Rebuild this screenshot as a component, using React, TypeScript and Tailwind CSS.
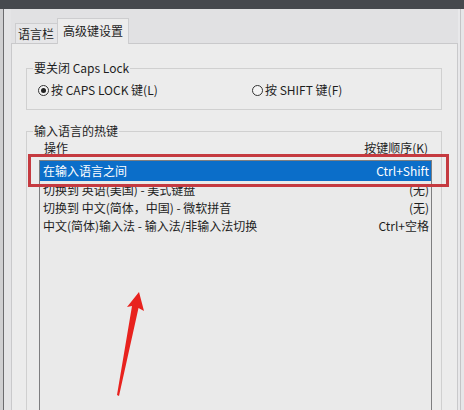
export default function App() {
  return (
    <div className="relative w-[464px] h-[410px] overflow-hidden flex flex-col bg-[#e1e1e3] text-[12px] leading-[16px] text-[#1e1e1e] font-['Noto_Sans_CJK_SC',sans-serif]">
      <div className="h-[9px] bg-[#46494e] shrink-0" />
      <div className="flex flex-1 min-h-0">
        <div className="w-[11px] shrink-0 flex">
          <div className="w-[3px] bg-[#cfcfd1]" />
          <div className="w-px bg-[#6b6b6e]" />
          <div className="flex-1 bg-[#e4e4e6]" />
        </div>
        <div className="w-[447px] shrink-0 flex flex-col">
          <div className="h-[34px] shrink-0 flex items-end pl-[4px]">
            <div className="w-[42px] h-[20px] border border-b-0 border-r-0 border-[#cdcdcf] bg-[#e6e6e8] flex items-center pl-[2px] whitespace-nowrap">
              语言栏
            </div>
            <div className="relative z-10 -mb-px w-[72px] h-[26px] border border-b-0 border-[#cdcdcf] bg-[#ececec] flex items-start justify-center pt-[4px] whitespace-nowrap">
              高级键设置
            </div>
          </div>
          <div className="flex-1 border border-b-0 border-[#c9c9cb] bg-[#ececec] pl-[14px] pt-[16px]">
            <fieldset className="w-[416px] border border-[#d0d0d0] pl-[6px] pb-[10px]">
              <legend className="px-[1px] leading-[16px]">要关闭 Caps Lock</legend>
              <div className="flex items-center h-[18px] mt-[5px] ml-[5px]">
                <div className="w-[214px] flex items-center gap-[2px]">
                  <span className="w-[11px] h-[11px] rounded-full border border-[#333] bg-[#f4f4f4] flex items-center justify-center">
                    <span className="w-[5px] h-[5px] rounded-full bg-[#222]" />
                  </span>
                  <span>按 CAPS LOCK 键(L)</span>
                </div>
                <div className="flex items-center gap-[2px]">
                  <span className="w-[11px] h-[11px] rounded-full border border-[#333] bg-[#f4f4f4]" />
                  <span>按 SHIFT 键(F)</span>
                </div>
              </div>
            </fieldset>
            <fieldset className="mt-[13px] w-[416px] h-[300px] border border-[#d0d0d0] pl-[6px] pr-[9px]">
              <legend className="px-[1px] leading-[16px]">输入语言的热键</legend>
              <div className="ml-[6px]">
                <div className="h-[18px] flex items-center justify-between pl-[5px] pr-[4px]">
                  <span>操作</span>
                  <span>按键顺序(K)</span>
                </div>
                <div className="mt-[3px] h-[260px] border border-[#7e7e80] bg-[#eaeaea]">
                  <div className="h-[20px] bg-[#0b6ec9] text-white flex items-center justify-between pl-[3px] pr-[2px]">
                    <span>在输入语言之间</span>
                    <span>Ctrl+Shift</span>
                  </div>
                  <div className="h-[18px] flex items-center justify-between pl-[3px] pr-[2px]">
                    <span>切换到 英语(美国) - 美式键盘</span>
                    <span>(无)</span>
                  </div>
                  <div className="h-[18px] flex items-center justify-between pl-[3px] pr-[2px]">
                    <span>切换到 中文(简体，中国) - 微软拼音</span>
                    <span>(无)</span>
                  </div>
                  <div className="h-[18px] flex items-center justify-between pl-[3px] pr-[2px]">
                    <span>中文(简体)输入法 - 输入法/非输入法切换</span>
                    <span>Ctrl+空格</span>
                  </div>
                </div>
              </div>
            </fieldset>
          </div>
        </div>
        <div className="flex-1 flex">
          <div className="w-[2px] bg-[#e8e8ea]" />
          <div className="w-px bg-[#c4c4c6]" />
          <div className="flex-1 bg-[#e6e6e8]" />
        </div>
      </div>
      <div className="absolute left-[28px] top-[154px] w-[421px] h-[33px] border-[3px] border-[#c53a40]" />
      <svg className="absolute left-0 top-0" width="464" height="410" viewBox="0 0 464 410">
        <polygon points="139,292 144,311 138.5,308 119,396 117,395 132,306 127,307" fill="#e8221e" />
      </svg>
    </div>
  );
}
